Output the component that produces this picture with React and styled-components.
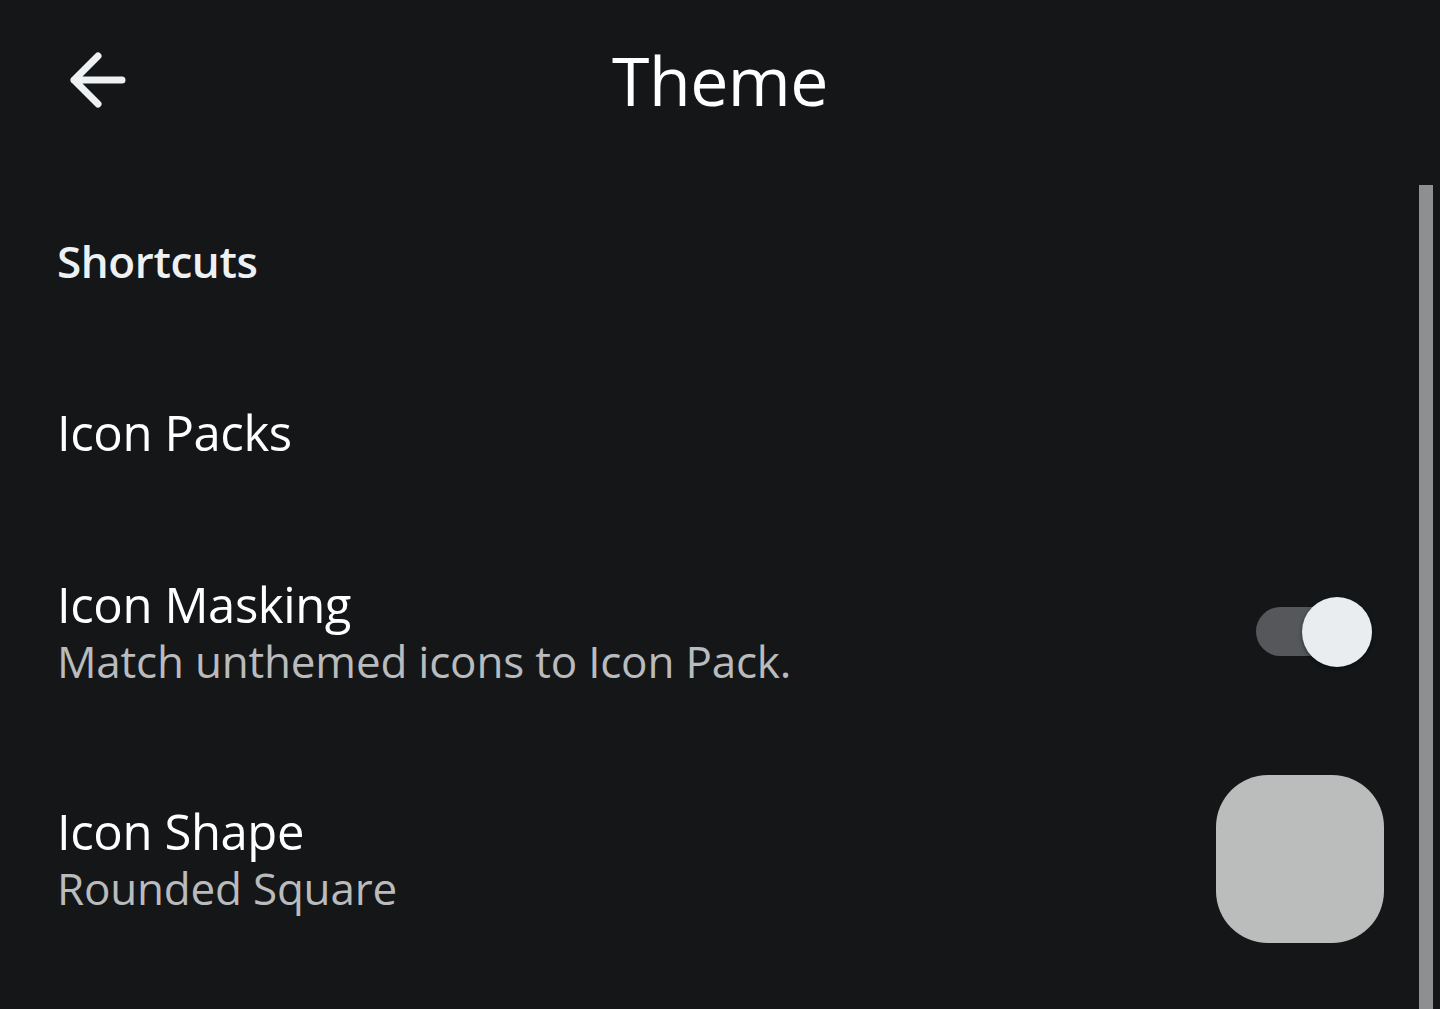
import React from "react";
import styled, { createGlobalStyle } from "styled-components";

const Global = createGlobalStyle`
  html, body { margin: 0; padding: 0; background: #151618; }
  body { font-family: "Open Sans", Roboto, "Noto Sans", sans-serif; color: #f1f3f5; }
  * { box-sizing: border-box; }
`;

const Screen = styled.div`
  position: relative;
  width: 1440px;
  height: 1009px;
  overflow: hidden;
  background: #151618;
`;

const Header = styled.header`
  height: 160px;
  display: grid;
  grid-template-columns: 160px 1fr 160px;
  align-items: center;
`;

const BackButton = styled.button`
  width: 160px;
  height: 160px;
  display: flex;
  align-items: center;
  justify-content: flex-start;
  padding: 0 0 0 68px;
  background: none;
  border: 0;
  cursor: pointer;
`;

const Title = styled.h1`
  margin: 0;
  text-align: center;
  font-size: 68px;
  font-weight: 400;
  color: #ffffff;
  line-height: 1;
  letter-spacing: -0.5px;
`;

const List = styled.div`
  display: flex;
  flex-direction: column;
`;

const Category = styled.div`
  height: 185px;
  display: flex;
  align-items: center;
  padding: 16px 56px 0 57px;
  font-size: 44px;
  font-weight: 600;
  color: #eef1f4;
  letter-spacing: -0.4px;
`;

const Row = styled.div`
  height: ${(p) => p.$h}px;
  display: flex;
  align-items: center;
  justify-content: space-between;
  padding: 0 56px 0 57px;
`;

const Texts = styled.div`
  display: flex;
  flex-direction: column;
`;

const RowTitle = styled.div`
  font-size: 49px;
  line-height: 58px;
  color: #ffffff;
  font-weight: 400;
  letter-spacing: -0.4px;
`;

const RowSub = styled.div`
  font-size: 44px;
  line-height: 56px;
  color: #b9bbbd;
  letter-spacing: -0.2px;
`;

const Switch = styled.div`
  position: relative;
  width: 116px;
  height: 70px;
  margin-right: 12px;
  display: flex;
  align-items: center;
`;

const Track = styled.div`
  width: 116px;
  height: 49px;
  border-radius: 25px;
  background: #55575b;
`;

const Thumb = styled.div`
  position: absolute;
  right: 0;
  top: 0;
  width: 70px;
  height: 70px;
  border-radius: 50%;
  background: #e9edf0;
  box-shadow: 0 2px 4px rgba(0, 0, 0, 0.45);
`;

const ShapePreview = styled.div`
  width: 168px;
  height: 168px;
  border-radius: 52px;
  background: #bbbdbc;
`;

const Scrollbar = styled.div`
  position: absolute;
  left: 1419px;
  top: 185px;
  width: 14px;
  bottom: 0;
  background: #8e8f91;
`;

export default function App() {
  return (
    <>
      <Global />
      <Screen>
        <Header>
          <BackButton aria-label="Back">
            <svg width="60" height="56" viewBox="0 0 60 56" fill="none">
              <path
                d="M30 4 L6 28 L30 52 M6 28 H54"
                stroke="#eef1f4"
                strokeWidth="7"
                strokeLinecap="round"
                strokeLinejoin="round"
              />
            </svg>
          </BackButton>
          <Title>Theme</Title>
          <div />
        </Header>
        <List>
          <Category>Shortcuts</Category>
          <Row $h={173}>
            <Texts>
              <RowTitle>Icon Packs</RowTitle>
            </Texts>
          </Row>
          <Row $h={227}>
            <Texts>
              <RowTitle>Icon Masking</RowTitle>
              <RowSub>Match unthemed icons to Icon Pack.</RowSub>
            </Texts>
            <Switch>
              <Track />
              <Thumb />
            </Switch>
          </Row>
          <Row $h={228}>
            <Texts>
              <RowTitle>Icon Shape</RowTitle>
              <RowSub>Rounded Square</RowSub>
            </Texts>
            <ShapePreview />
          </Row>
        </List>
        <Scrollbar />
      </Screen>
    </>
  );
}
